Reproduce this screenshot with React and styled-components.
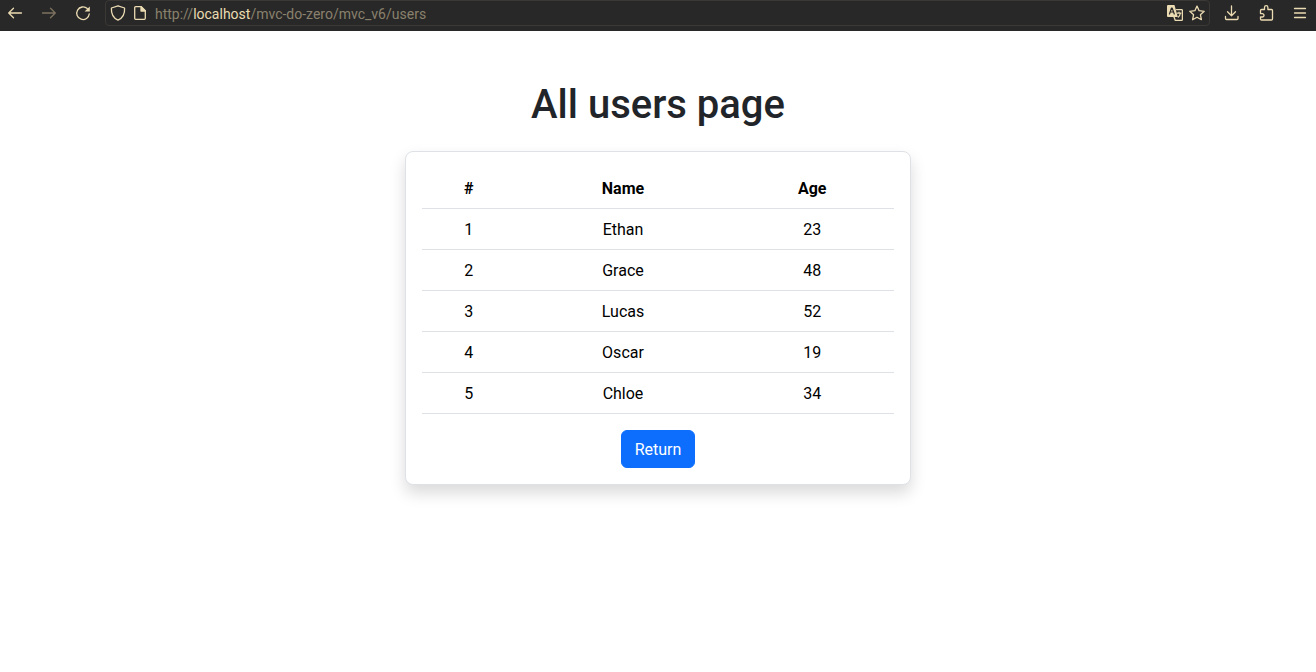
import React from "react";
import styled, { createGlobalStyle } from "styled-components";

const GlobalStyle = createGlobalStyle`
  *, *::before, *::after { box-sizing: border-box; }
  body {
    margin: 0;
    background: #fff;
    color: #212529;
    font-family: Roboto, "Noto Sans", sans-serif;
    font-size: 16px;
    line-height: 24px;
  }
`;

const Toolbar = styled.header`
  display: flex;
  align-items: flex-start;
  height: 31px;
  padding: 0 8px 0 7px;
  background: #282828;
  color: #ebdbb2;
`;

const NavGroup = styled.nav`
  display: flex;
  align-items: center;
  gap: 18px;
  height: 26px;
`;

const ActionGroup = styled(NavGroup).attrs({ as: "div" })``;

const IconButton = styled.button`
  display: block;
  width: 16px;
  height: 16px;
  padding: 0;
  border: 0;
  background: none;
  color: inherit;
  cursor: pointer;

  &:disabled {
    color: #7c725f;
    cursor: default;
  }
`;

const Icon = styled.svg.attrs({
  viewBox: "0 0 16 16",
  fill: "none",
  stroke: "currentColor",
  strokeWidth: 1.3,
  strokeLinecap: "round",
  strokeLinejoin: "round",
  "aria-hidden": true,
})`
  display: block;
  width: 16px;
  height: 16px;
`;

const AddressBar = styled.div`
  display: flex;
  flex: 1;
  align-items: center;
  gap: 6px;
  min-width: 0;
  height: 26px;
  margin: 0 14px;
  padding: 0 4px;
  border: 1px solid #3c3836;
  border-radius: 4px;
`;

const Address = styled.div`
  flex: 1;
  min-width: 0;
  overflow: hidden;
  padding: 2px 0 0 1px;
  color: #8a816d;
  font-size: 14px;
  line-height: 20px;
  white-space: nowrap;
  outline: none;
`;

const Host = styled.span`
  color: #ebdbb2;
`;

const Page = styled.main`
  display: flex;
  flex-direction: column;
  align-items: center;
  padding: 50px 12px;
`;

const Title = styled.h1`
  margin: 0 0 22px;
  font-size: 40px;
  font-weight: 500;
  line-height: 48px;
  text-align: center;
`;

const Card = styled.section`
  width: 100%;
  max-width: 506px;
  padding: 16px;
  border: 1px solid #dee2e6;
  border-radius: 8px;
  background: #fff;
  box-shadow: 0 8px 16px rgba(0, 0, 0, 0.15);
  text-align: center;
`;

const Table = styled.table`
  width: 100%;
  margin-bottom: 16px;
  border-collapse: collapse;
  color: #000;
`;

const HeadCell = styled.th`
  padding: 9px 8px 7px;
  border-bottom: 1px solid #dee2e6;
  font-weight: 700;
`;

const Cell = styled.td`
  padding: 9px 8px 7px;
  border-bottom: 1px solid #dee2e6;
`;

const ReturnButton = styled.button`
  display: block;
  margin: 0 auto;
  padding: 7px 13px 5px;
  border: 1px solid #0d6efd;
  border-radius: 6px;
  background: #0d6efd;
  color: #fff;
  font: inherit;
  cursor: pointer;
`;

const users = [
  { id: 1, name: "Ethan", age: 23 },
  { id: 2, name: "Grace", age: 48 },
  { id: 3, name: "Lucas", age: 52 },
  { id: 4, name: "Oscar", age: 19 },
  { id: 5, name: "Chloe", age: 34 },
];

function BrowserToolbar() {
  return (
    <Toolbar>
      <NavGroup aria-label="History">
        <IconButton aria-label="Back">
          <Icon><path d="M6.5 3.2 1.7 8l4.800 4.800M1.700 8h12.800" /></Icon>
        </IconButton>
        <IconButton aria-label="Forward" disabled>
          <Icon><path d="M9.500 3.200 14.300 8l-4.800 4.800M14.300 8H1.500" /></Icon>
        </IconButton>
        <IconButton aria-label="Reload">
          <Icon>
            <path d="M12.300 3.600A6.300 6.300 0 1 0 14.300 8.800" />
            <path d="M14.800 1.400v5.200H9.600z" fill="currentColor" stroke="none" />
          </Icon>
        </IconButton>
      </NavGroup>
      <AddressBar>
        <IconButton aria-label="Tracking protection">
          <Icon><path d="M8 .8 14.600 3c.3 5.300-1.600 9.900-6.600 12.200C3 12.900 1.100 8.300 1.400 3z" /></Icon>
        </IconButton>
        <IconButton aria-label="Site information">
          <Icon>
            <path d="M3.700 1.700h5.600l4 4v7.600a1 1 0 0 1-1 1H3.700a1 1 0 0 1-1-1V2.700a1 1 0 0 1 1-1z" />
            <path d="M9 1.700v4.300h4.300z" fill="currentColor" />
          </Icon>
        </IconButton>
        <Address role="textbox" aria-label="Address" tabIndex={0}>
          http://<Host>localhost</Host>/mvc-do-zero/mvc_v6/users
        </Address>
        <IconButton aria-label="Translate page">
          <Icon>
            <path d="M9.500 4.600h5.100a.8.800 0 0 1 .8.800v9.200a.8.800 0 0 1-.8.800H8.300L7 12" />
            <path d="M1 0h6.500l3.300 12H1a1 1 0 0 1-1-1V1a1 1 0 0 1 1-1z" fill="currentColor" stroke="none" />
            <path d="M2.500 9 4.500 3h.6l2.200 6M3.300 7h3.300" stroke="#282828" strokeWidth="1.200" />
            <path d="M10.300 8.100h3.700M12 7v1.100M13.300 8.300c-.3 1.700-1 2.900-2 3.800" strokeWidth="1.200" />
          </Icon>
        </IconButton>
        <IconButton aria-label="Bookmark this page">
          <Icon><path d="m8 1.100 2.100 4.600 5.100.6-3.800 3.400 1 5L8 12.200l-4.400 2.500 1-5L.8 6.300l5.100-.6z" /></Icon>
        </IconButton>
      </AddressBar>
      <ActionGroup>
        <IconButton aria-label="Downloads">
          <Icon><path d="M7.500 1v9.500M3.500 6.700l4 4 4-4M1.500 11.500v2a1 1 0 0 0 1 1h10.500a1 1 0 0 0 1-1v-2" /></Icon>
        </IconButton>
        <IconButton aria-label="Extensions">
          <Icon><path d="M3.500 4.500h3V2.400a1.700 1.700 0 0 1 3.400 0v2.100h3.600a1 1 0 0 1 1 1v8.500a1 1 0 0 1-1 1h-10a1 1 0 0 1-1-1v-2h1.800a1.600 1.600 0 0 0 0-3.400H2.500V5.500a1 1 0 0 1 1-1z" /></Icon>
        </IconButton>
        <IconButton aria-label="Open menu">
          <Icon><path d="M2.500 3.500h11M2.500 8h11M2.500 12.500h11" /></Icon>
        </IconButton>
      </ActionGroup>
    </Toolbar>
  );
}

export default function App() {
  return (
    <>
      <GlobalStyle />
      <BrowserToolbar />
      <Page>
        <Title>All users page</Title>
        <Card>
          <Table>
            <thead>
              <tr>
                <HeadCell scope="col">#</HeadCell>
                <HeadCell scope="col">Name</HeadCell>
                <HeadCell scope="col">Age</HeadCell>
              </tr>
            </thead>
            <tbody>
              {users.map((user) => (
                <tr key={user.id}>
                  <Cell>{user.id}</Cell>
                  <Cell>{user.name}</Cell>
                  <Cell>{user.age}</Cell>
                </tr>
              ))}
            </tbody>
          </Table>
          <ReturnButton type="button">Return</ReturnButton>
        </Card>
      </Page>
    </>
  );
}
